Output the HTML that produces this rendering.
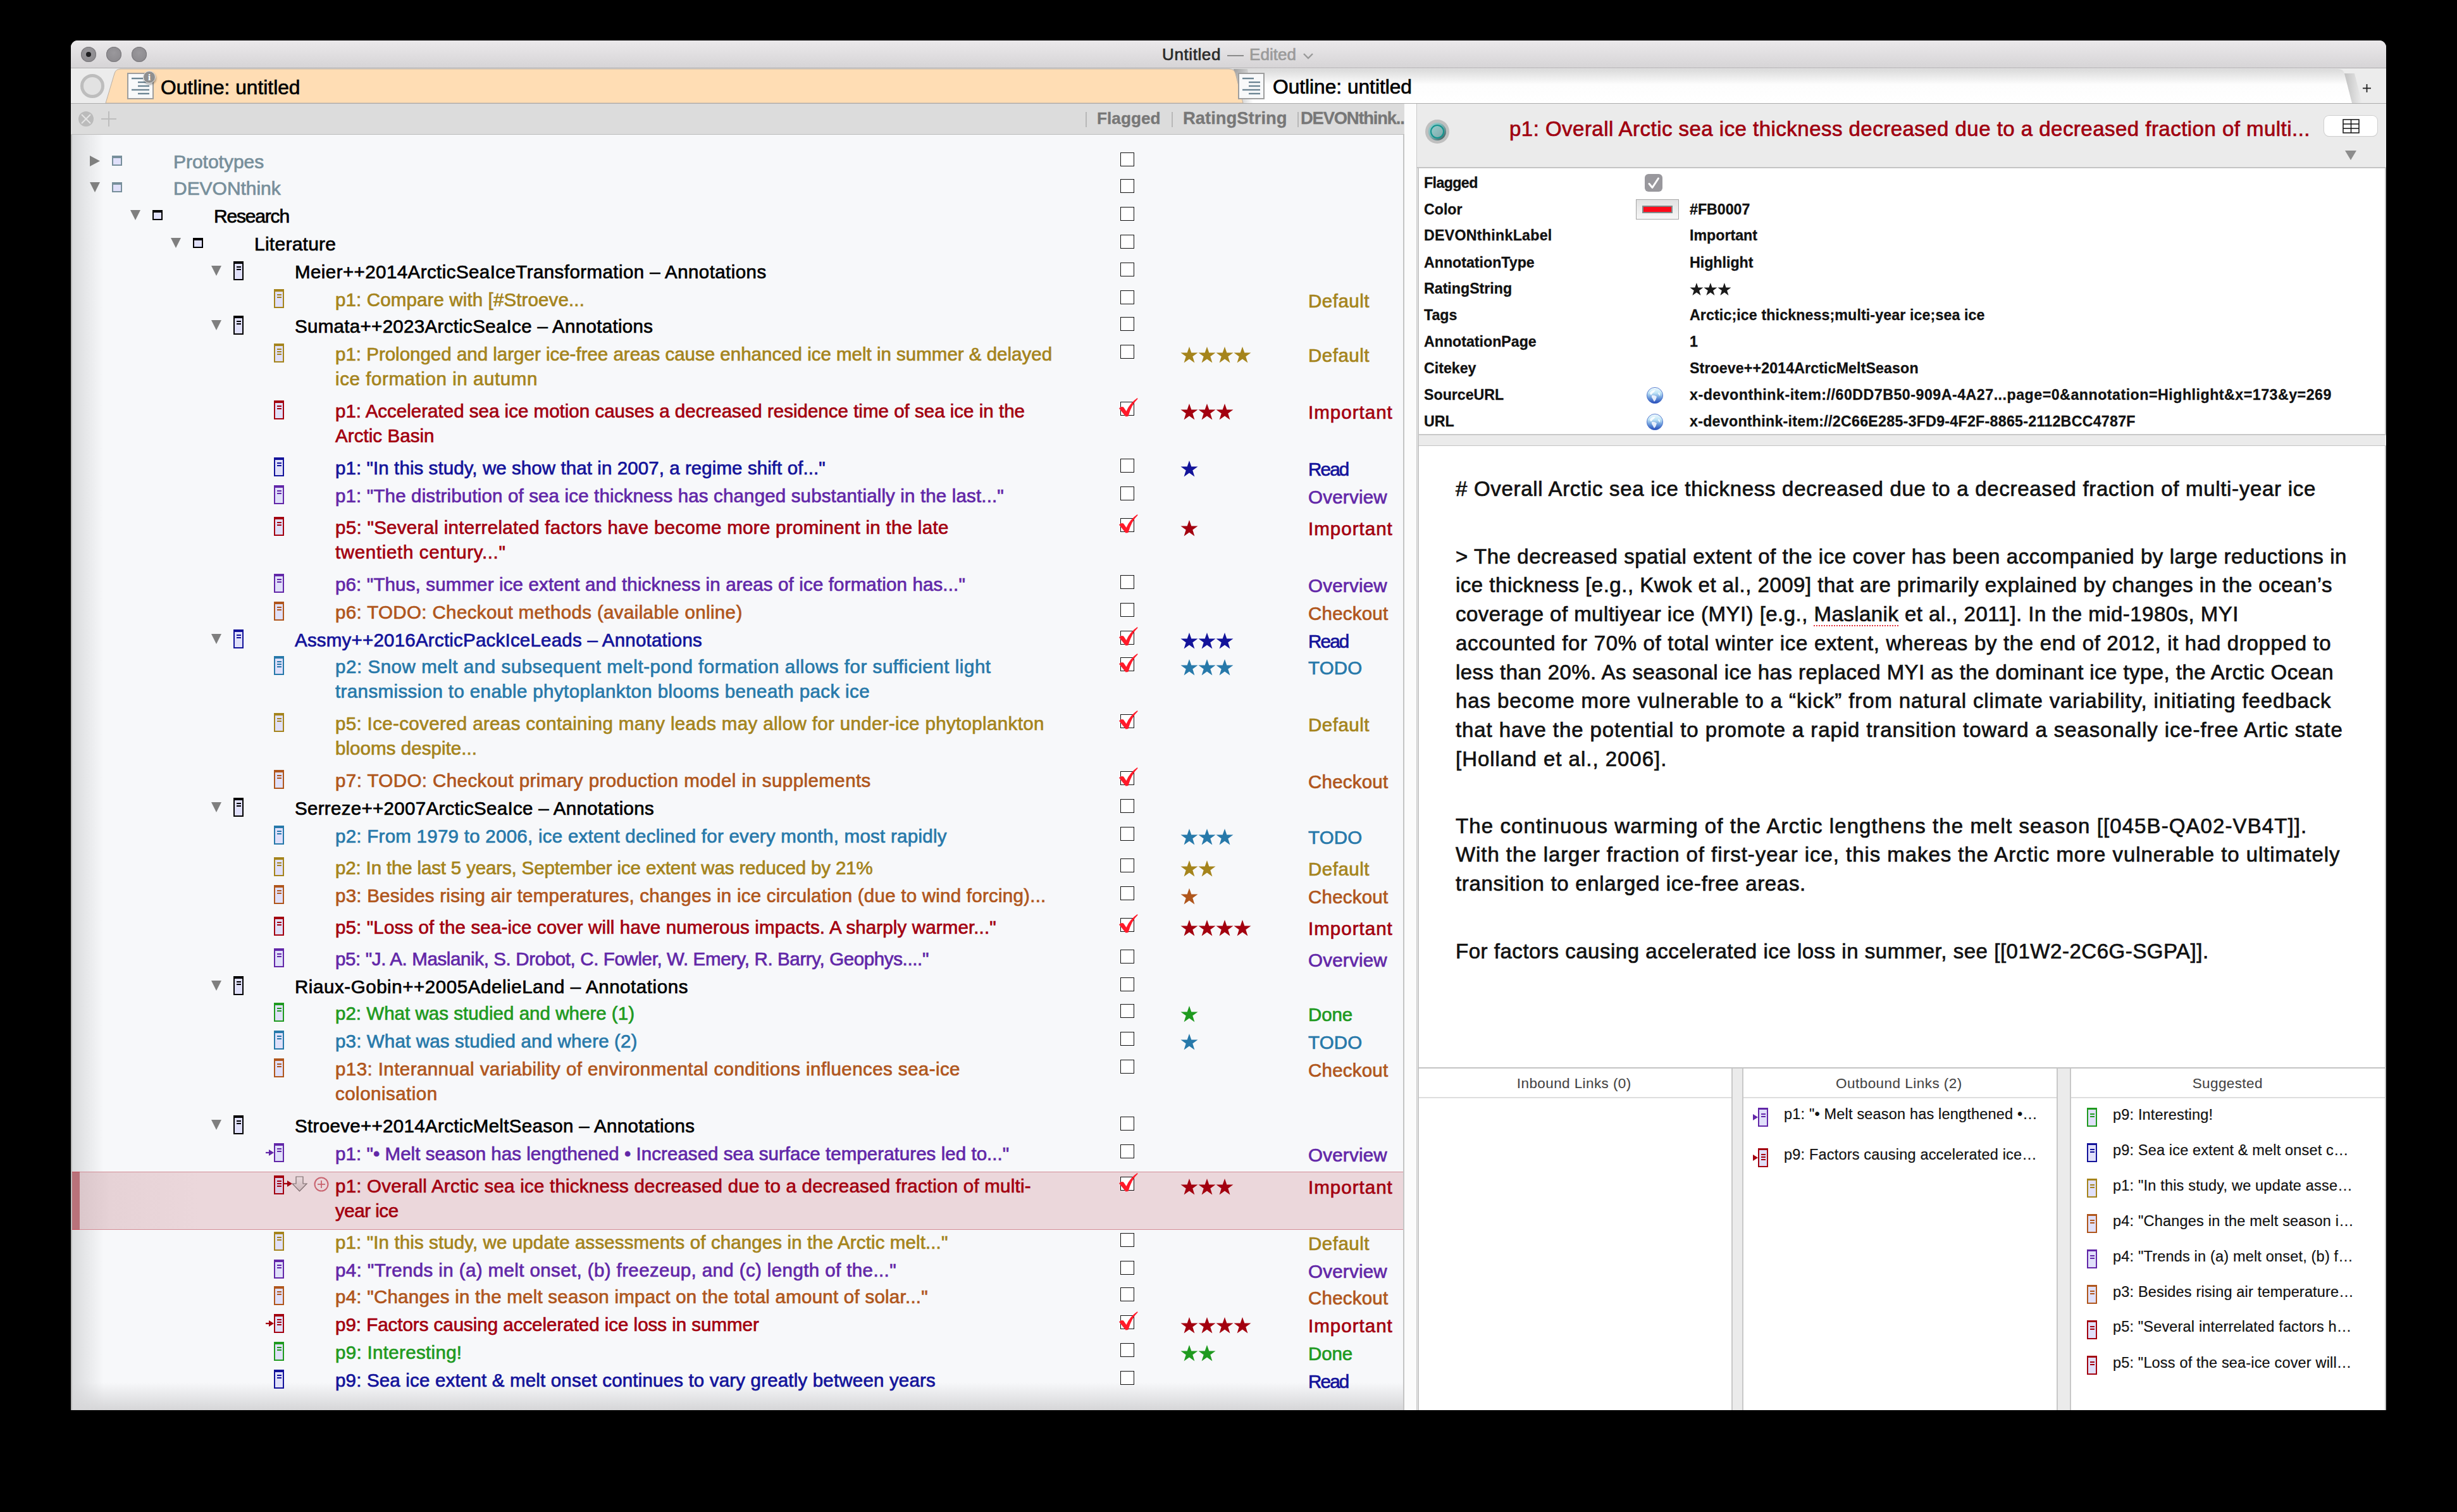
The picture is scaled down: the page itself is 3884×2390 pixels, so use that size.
<!DOCTYPE html><html><head><meta charset="utf-8"><style>
html,body{margin:0;padding:0;}
body{width:3884px;height:2390px;background:#000;position:relative;overflow:hidden;font-family:"Liberation Sans", sans-serif;}
.r{position:absolute;}
.t{position:absolute;white-space:nowrap;font-family:"Liberation Sans", sans-serif;-webkit-text-stroke:0.7px currentColor;}
.t b,.bd{-webkit-text-stroke-width:0.3px;}
</style></head><body>
<div class="r" style="left:112px;top:64px;width:3660px;height:2165px;background:#ececec;border-radius:11px 11px 0 0;"></div>
<div class="r" style="left:112px;top:64px;width:3660px;height:43px;background:linear-gradient(#ebe9eb,#d6d4d6);border-radius:11px 11px 0 0;"></div>
<div class="r" style="left:112px;top:107px;width:3660px;height:1px;background:#aeacae;"></div>
<div class="r" style="left:128px;top:74px;width:24px;height:24px;border-radius:50%;background:radial-gradient(circle at 50% 40%,#9a989c,#88868a);box-shadow:inset 0 0 0 1px #7b797d;"></div>
<div class="r" style="left:168px;top:74px;width:24px;height:24px;border-radius:50%;background:radial-gradient(circle at 50% 40%,#9a989c,#88868a);box-shadow:inset 0 0 0 1px #7b797d;"></div>
<div class="r" style="left:208px;top:74px;width:24px;height:24px;border-radius:50%;background:radial-gradient(circle at 50% 40%,#9a989c,#88868a);box-shadow:inset 0 0 0 1px #7b797d;"></div>
<div class="r" style="left:136px;top:82px;width:8px;height:8px;border-radius:50%;background:#1e1e20;"></div>
<div class="t kti1" style="left:1837.00px;top:71.39px;font-size:26px;line-height:31.2px;color:#2a2a2a;letter-spacing:0.605px;">Untitled</div>
<div class="r" style="left:1940px;top:87px;width:26px;height:2.4px;background:#8a8a8a;"></div>
<div class="t kti2" style="left:1975.00px;top:71.39px;font-size:26px;line-height:31.2px;color:#9a9a9a;letter-spacing:0.044px;">Edited</div>
<svg class="r" style="left:2059px;top:83px;" width="18" height="12" viewBox="0 0 18 12"><polyline points="2,2 9,9 16,2" fill="none" stroke="#9a9a9a" stroke-width="2.4"/></svg>
<div class="r" style="left:112px;top:108px;width:3660px;height:55px;background:#ececec;"></div>
<div class="r" style="left:127px;top:117px;width:28px;height:28px;border-radius:50%;border:5px solid #bdbdbd;background:#e2e2e2;"></div>
<svg class="r" style="left:1940px;top:108px;" width="1790" height="56" viewBox="0 0 1790 56"><defs><linearGradient id="tg" x1="0" y1="0" x2="0" y2="1"><stop offset="0" stop-color="#d9d9d9"/><stop offset="0.45" stop-color="#fdfdfd"/><stop offset="1" stop-color="#ffffff"/></linearGradient></defs><path d="M0,55 L0,1 L1756,1 Q1764,1 1766,8 L1778,55 Z" fill="url(#tg)"/></svg>
<svg class="r" style="left:3700px;top:108px;" width="40" height="56" viewBox="0 0 40 56"><defs><linearGradient id="sg2" x1="0" y1="0" x2="1" y2="0"><stop offset="0" stop-color="rgba(0,0,0,0.18)"/><stop offset="1" stop-color="rgba(0,0,0,0)"/></linearGradient></defs><path d="M6,8 L18,55 L34,55 L22,8 Z" fill="url(#sg2)"/></svg>
<svg class="r" style="left:1945px;top:108px;" width="40" height="56" viewBox="0 0 40 56"><defs><linearGradient id="sg1" x1="0" y1="0" x2="1" y2="0"><stop offset="0" stop-color="rgba(0,0,0,0.28)"/><stop offset="1" stop-color="rgba(0,0,0,0)"/></linearGradient></defs><path d="M5,1 L16,55 L36,55 L27,1 Z" fill="url(#sg1)"/></svg>
<svg class="r" style="left:150px;top:108px;" width="1830" height="56" viewBox="0 0 1830 56"><path d="M17,55 L31,8 Q33,1 41,1 L1793,1 Q1801,1 1803,8 L1815,55 Z" fill="#ffddb4" stroke="#b9b0a6" stroke-width="1"/></svg>
<div class="r" style="left:112px;top:163px;width:3660px;height:1px;background:#acacac;"></div>
<svg class="r" style="left:201px;top:115px;" width="42" height="42" viewBox="0 0 42 42"><rect x="1" y="1" width="40" height="40" fill="#f8f9fa" stroke="#9e9e9e" stroke-width="2"/><g stroke="#6d8593" stroke-width="2.4"><line x1="7" y1="9" x2="25" y2="9"/><line x1="17" y1="15" x2="35" y2="15"/><line x1="17" y1="21" x2="35" y2="21"/><line x1="7" y1="27" x2="35" y2="27"/><line x1="17" y1="33" x2="35" y2="33"/></g></svg>
<div class="r" style="left:226px;top:112px;width:18px;height:18px;border-radius:50%;background:#8f8f8f;border:1.5px solid #e8e8e8;box-shadow:1px 2px 3px rgba(0,0,0,.35);color:#fff;font:bold 15px/18px 'Liberation Serif',serif;text-align:center;">i</div>
<div class="t ktab1" style="left:254.00px;top:118.50px;font-size:31.7px;line-height:38.04px;color:#000;letter-spacing:0.018px;">Outline: untitled</div>
<svg class="r" style="left:1957px;top:115px;" width="42" height="42" viewBox="0 0 42 42"><rect x="1" y="1" width="40" height="40" fill="#f8f9fa" stroke="#9e9e9e" stroke-width="2"/><g stroke="#6d8593" stroke-width="2.4"><line x1="7" y1="9" x2="25" y2="9"/><line x1="17" y1="15" x2="35" y2="15"/><line x1="17" y1="21" x2="35" y2="21"/><line x1="7" y1="27" x2="35" y2="27"/><line x1="17" y1="33" x2="35" y2="33"/></g></svg>
<div class="t ktab2" style="left:2012.00px;top:117.50px;font-size:31.7px;line-height:38.04px;color:#000;letter-spacing:-0.012px;">Outline: untitled</div>
<svg class="r" style="left:3735px;top:133px;" width="13" height="13" viewBox="0 0 13 13"><g stroke="#222" stroke-width="1.8"><line x1="6.5" y1="0" x2="6.5" y2="13"/><line x1="0" y1="6.5" x2="13" y2="6.5"/></g></svg>
<div class="r" style="left:112px;top:164px;width:2108px;height:48px;background:#dcdcdc;"></div>
<div class="r" style="left:112px;top:212px;width:2108px;height:1px;background:#bdbdbd;"></div>
<svg class="r" style="left:123px;top:175px;" width="26" height="26" viewBox="0 0 26 26"><circle cx="13" cy="13" r="12" fill="#bbbbbb"/><g stroke="#e4e4e4" stroke-width="2"><line x1="6" y1="6" x2="20" y2="20"/><line x1="20" y1="6" x2="6" y2="20"/></g></svg>
<svg class="r" style="left:159px;top:175px;" width="26" height="26" viewBox="0 0 26 26"><g stroke="#bdbdbd" stroke-width="2"><line x1="13" y1="1" x2="13" y2="25"/><line x1="1" y1="13" x2="25" y2="13"/></g></svg>
<div class="r" style="left:1716px;top:177px;width:1.5px;height:24px;background:#b8b8b8;"></div>
<div class="r" style="left:1852px;top:177px;width:1.5px;height:24px;background:#b8b8b8;"></div>
<div class="r" style="left:2051px;top:177px;width:1.5px;height:24px;background:#b8b8b8;"></div>
<div class="t kh1" style="left:1734.00px;top:172.20px;font-size:26.2px;line-height:31.44px;color:#777;font-weight:bold;-webkit-text-stroke-width:0.3px;letter-spacing:0.030px;">Flagged</div>
<div class="t kh2" style="left:1870.00px;top:171.07px;font-size:27.4px;line-height:32.88px;color:#777;font-weight:bold;-webkit-text-stroke-width:0.3px;letter-spacing:0.021px;">RatingString</div>
<div class="t" style="left:2056.00px;top:171.07px;font-size:27.4px;line-height:32.88px;color:#777;font-weight:bold;-webkit-text-stroke-width:0.3px;letter-spacing:-1.2px;">DEVONthink..</div>
<div class="r" style="left:114px;top:213px;width:2104px;height:2016px;background:#f7f8fa;"></div>
<div class="r" style="left:114px;top:213px;width:50px;height:2016px;background:linear-gradient(90deg,#d9dadc,rgba(247,248,250,0));"></div>
<div class="r" style="left:114px;top:2185px;width:2104px;height:44px;background:linear-gradient(rgba(247,248,250,0),#d6d6d8);"></div>
<div class="r" style="left:2218px;top:213px;width:2px;height:2016px;background:#c4c4c4;"></div>
<div class="r" style="left:2220px;top:164px;width:19px;height:2065px;background:#fbfbfb;"></div>
<div class="r" style="left:2239px;top:164px;width:1px;height:2065px;background:#c8c8c8;"></div>
<svg class="r" style="left:142px;top:246px;" width="16" height="17" viewBox="0 0 16 17"><polygon points="0,0 16,8.5 0,17" fill="#7f7f7f"/></svg>
<svg class="r" style="left:177px;top:246px;" width="16" height="16" viewBox="0 0 16 16"><rect x="1" y="1" width="14" height="14" fill="#e0e0fa" stroke="#778f9b" stroke-width="2"/><rect x="0" y="0" width="16" height="4" fill="#778f9b"/></svg>
<div class="t k0_0" style="left:274.00px;top:237.60px;font-size:30px;line-height:36.0px;color:#778f9b;letter-spacing:-0.022px;">Prototypes</div>
<div class="r" style="left:1771px;top:241px;width:22px;height:22px;background:#fff;border:1.5px solid #111;box-sizing:border-box;"></div>
<svg class="r" style="left:142px;top:288px;" width="16" height="16" viewBox="0 0 16 16"><polygon points="0,0 16,0 8,16" fill="#7f7f7f"/></svg>
<svg class="r" style="left:177px;top:288px;" width="16" height="16" viewBox="0 0 16 16"><rect x="1" y="1" width="14" height="14" fill="#e0e0fa" stroke="#778f9b" stroke-width="2"/><rect x="0" y="0" width="16" height="4" fill="#778f9b"/></svg>
<div class="t k1_0" style="left:274.00px;top:279.61px;font-size:30px;line-height:36.0px;color:#778f9b;letter-spacing:-0.036px;">DEVONthink</div>
<div class="r" style="left:1771px;top:283px;width:22px;height:22px;background:#fff;border:1.5px solid #111;box-sizing:border-box;"></div>
<svg class="r" style="left:206px;top:332px;" width="16" height="16" viewBox="0 0 16 16"><polygon points="0,0 16,0 8,16" fill="#7f7f7f"/></svg>
<svg class="r" style="left:241px;top:332px;" width="16" height="16" viewBox="0 0 16 16"><rect x="1" y="1" width="14" height="14" fill="#e0e0fa" stroke="#000" stroke-width="2"/><rect x="0" y="0" width="16" height="4" fill="#000"/></svg>
<div class="t k2_0" style="left:338.00px;top:323.61px;font-size:30px;line-height:36.0px;color:#000;letter-spacing:-1.188px;">Research</div>
<div class="r" style="left:1771px;top:327px;width:22px;height:22px;background:#fff;border:1.5px solid #111;box-sizing:border-box;"></div>
<svg class="r" style="left:270px;top:376px;" width="16" height="16" viewBox="0 0 16 16"><polygon points="0,0 16,0 8,16" fill="#7f7f7f"/></svg>
<svg class="r" style="left:305px;top:376px;" width="16" height="16" viewBox="0 0 16 16"><rect x="1" y="1" width="14" height="14" fill="#e0e0fa" stroke="#000" stroke-width="2"/><rect x="0" y="0" width="16" height="4" fill="#000"/></svg>
<div class="t k3_0" style="left:402.00px;top:367.61px;font-size:30px;line-height:36.0px;color:#000;letter-spacing:0.255px;">Literature</div>
<div class="r" style="left:1771px;top:371px;width:22px;height:22px;background:#fff;border:1.5px solid #111;box-sizing:border-box;"></div>
<svg class="r" style="left:334px;top:420px;" width="16" height="16" viewBox="0 0 16 16"><polygon points="0,0 16,0 8,16" fill="#7f7f7f"/></svg>
<svg class="r" style="left:369px;top:413px;" width="16" height="30" viewBox="0 0 16 30"><rect x="1" y="1" width="14" height="28" fill="#e0e0fa" stroke="#000" stroke-width="2"/><rect x="0" y="0" width="16" height="4" fill="#000"/><rect x="5" y="8" width="7" height="2" fill="#000"/><rect x="5" y="12" width="7" height="2" fill="#000"/></svg>
<div class="t k4_0" style="left:466.00px;top:412.08px;font-size:29.5px;line-height:35.4px;color:#000;letter-spacing:0.429px;">Meier++2014ArcticSeaIceTransformation – Annotations</div>
<div class="r" style="left:1771px;top:415px;width:22px;height:22px;background:#fff;border:1.5px solid #111;box-sizing:border-box;"></div>
<svg class="r" style="left:433px;top:457px;" width="16" height="30" viewBox="0 0 16 30"><rect x="1" y="1" width="14" height="28" fill="#e0e0fa" stroke="#a5841c" stroke-width="2"/><rect x="0" y="0" width="16" height="4" fill="#a5841c"/><rect x="5" y="8" width="7" height="2" fill="#a5841c"/><rect x="5" y="12" width="7" height="2" fill="#a5841c"/></svg>
<div class="t k5_0" style="left:530.00px;top:456.08px;font-size:29.5px;line-height:35.4px;color:#a5841c;letter-spacing:0.129px;">p1: Compare with [#Stroeve...</div>
<div class="r" style="left:1771px;top:459px;width:22px;height:22px;background:#fff;border:1.5px solid #111;box-sizing:border-box;"></div>
<div class="t klab_Default" style="left:2068.00px;top:458.08px;font-size:29.5px;line-height:35.4px;color:#a5841c;letter-spacing:0.503px;">Default</div>
<svg class="r" style="left:334px;top:506px;" width="16" height="16" viewBox="0 0 16 16"><polygon points="0,0 16,0 8,16" fill="#7f7f7f"/></svg>
<svg class="r" style="left:369px;top:499px;" width="16" height="30" viewBox="0 0 16 30"><rect x="1" y="1" width="14" height="28" fill="#e0e0fa" stroke="#000" stroke-width="2"/><rect x="0" y="0" width="16" height="4" fill="#000"/><rect x="5" y="8" width="7" height="2" fill="#000"/><rect x="5" y="12" width="7" height="2" fill="#000"/></svg>
<div class="t k6_0" style="left:466.00px;top:498.08px;font-size:29.5px;line-height:35.4px;color:#000;letter-spacing:0.315px;">Sumata++2023ArcticSeaIce – Annotations</div>
<div class="r" style="left:1771px;top:501px;width:22px;height:22px;background:#fff;border:1.5px solid #111;box-sizing:border-box;"></div>
<svg class="r" style="left:433px;top:543px;" width="16" height="30" viewBox="0 0 16 30"><rect x="1" y="1" width="14" height="28" fill="#e0e0fa" stroke="#a5841c" stroke-width="2"/><rect x="0" y="0" width="16" height="4" fill="#a5841c"/><rect x="5" y="8" width="7" height="2" fill="#a5841c"/><rect x="5" y="12" width="7" height="2" fill="#a5841c"/><rect x="5" y="16" width="7" height="2" fill="#a5841c"/></svg>
<div class="t k7_0" style="left:530.00px;top:542.08px;font-size:29.5px;line-height:35.4px;color:#a5841c;letter-spacing:-0.001px;">p1: Prolonged and larger ice-free areas cause enhanced ice melt in summer &amp; delayed</div>
<div class="t k7_1" style="left:530.00px;top:581.08px;font-size:29.5px;line-height:35.4px;color:#a5841c;letter-spacing:0.581px;">ice formation in autumn</div>
<div class="r" style="left:1771px;top:545px;width:22px;height:22px;background:#fff;border:1.5px solid #111;box-sizing:border-box;"></div>
<svg class="r" style="left:1866px;top:548px;" width="112" height="27" viewBox="0 0 112 27"><path transform="translate(0,0)" d="M14,0 L17.3,9.6 L27.5,9.6 L19.3,15.6 L22.4,25.6 L14,19.5 L5.6,25.6 L8.7,15.6 L0.5,9.6 L10.7,9.6 Z" fill="#a5841c"/><path transform="translate(28,0)" d="M14,0 L17.3,9.6 L27.5,9.6 L19.3,15.6 L22.4,25.6 L14,19.5 L5.6,25.6 L8.7,15.6 L0.5,9.6 L10.7,9.6 Z" fill="#a5841c"/><path transform="translate(56,0)" d="M14,0 L17.3,9.6 L27.5,9.6 L19.3,15.6 L22.4,25.6 L14,19.5 L5.6,25.6 L8.7,15.6 L0.5,9.6 L10.7,9.6 Z" fill="#a5841c"/><path transform="translate(84,0)" d="M14,0 L17.3,9.6 L27.5,9.6 L19.3,15.6 L22.4,25.6 L14,19.5 L5.6,25.6 L8.7,15.6 L0.5,9.6 L10.7,9.6 Z" fill="#a5841c"/></svg>
<div class="t klab_Default" style="left:2068.00px;top:544.08px;font-size:29.5px;line-height:35.4px;color:#a5841c;letter-spacing:0.503px;">Default</div>
<svg class="r" style="left:433px;top:633px;" width="16" height="30" viewBox="0 0 16 30"><rect x="1" y="1" width="14" height="28" fill="#e0e0fa" stroke="#a3000f" stroke-width="2"/><rect x="0" y="0" width="16" height="4" fill="#a3000f"/><rect x="5" y="8" width="7" height="2" fill="#a3000f"/><rect x="5" y="12" width="7" height="2" fill="#a3000f"/></svg>
<div class="t k8_0" style="left:530.00px;top:632.08px;font-size:29.5px;line-height:35.4px;color:#a3000f;letter-spacing:0.014px;">p1: Accelerated sea ice motion causes a decreased residence time of sea ice in the</div>
<div class="t k8_1" style="left:530.00px;top:671.08px;font-size:29.5px;line-height:35.4px;color:#a3000f;letter-spacing:0.072px;">Arctic Basin</div>
<div class="r" style="left:1771px;top:635px;width:22px;height:22px;background:#fff;border:1.5px solid #111;box-sizing:border-box;"></div>
<svg class="r" style="left:1768px;top:628px;" width="31" height="31" viewBox="0 0 31 31"><path d="M1,17.5 Q4,14 8,15.5 L12.5,22 Q18,9 30,1 L30.5,2.5 Q21,11 15.5,30 L11.5,30.5 Z" fill="#ff1a2a"/></svg>
<svg class="r" style="left:1866px;top:638px;" width="84" height="27" viewBox="0 0 84 27"><path transform="translate(0,0)" d="M14,0 L17.3,9.6 L27.5,9.6 L19.3,15.6 L22.4,25.6 L14,19.5 L5.6,25.6 L8.7,15.6 L0.5,9.6 L10.7,9.6 Z" fill="#a3000f"/><path transform="translate(28,0)" d="M14,0 L17.3,9.6 L27.5,9.6 L19.3,15.6 L22.4,25.6 L14,19.5 L5.6,25.6 L8.7,15.6 L0.5,9.6 L10.7,9.6 Z" fill="#a3000f"/><path transform="translate(56,0)" d="M14,0 L17.3,9.6 L27.5,9.6 L19.3,15.6 L22.4,25.6 L14,19.5 L5.6,25.6 L8.7,15.6 L0.5,9.6 L10.7,9.6 Z" fill="#a3000f"/></svg>
<div class="t klab_Important" style="left:2068.00px;top:634.08px;font-size:29.5px;line-height:35.4px;color:#a3000f;letter-spacing:1.019px;">Important</div>
<svg class="r" style="left:433px;top:723px;" width="16" height="30" viewBox="0 0 16 30"><rect x="1" y="1" width="14" height="28" fill="#e0e0fa" stroke="#13139a" stroke-width="2"/><rect x="0" y="0" width="16" height="4" fill="#13139a"/><rect x="5" y="8" width="7" height="2" fill="#13139a"/><rect x="5" y="12" width="7" height="2" fill="#13139a"/></svg>
<div class="t k9_0" style="left:530.00px;top:722.08px;font-size:29.5px;line-height:35.4px;color:#13139a;letter-spacing:0.080px;">p1: "In this study, we show that in 2007, a regime shift of..."</div>
<div class="r" style="left:1771px;top:725px;width:22px;height:22px;background:#fff;border:1.5px solid #111;box-sizing:border-box;"></div>
<svg class="r" style="left:1866px;top:728px;" width="28" height="27" viewBox="0 0 28 27"><path transform="translate(0,0)" d="M14,0 L17.3,9.6 L27.5,9.6 L19.3,15.6 L22.4,25.6 L14,19.5 L5.6,25.6 L8.7,15.6 L0.5,9.6 L10.7,9.6 Z" fill="#13139a"/></svg>
<div class="t klab_Read" style="left:2068.00px;top:724.08px;font-size:29.5px;line-height:35.4px;color:#13139a;letter-spacing:-1.782px;">Read</div>
<svg class="r" style="left:433px;top:767px;" width="16" height="30" viewBox="0 0 16 30"><rect x="1" y="1" width="14" height="28" fill="#e0e0fa" stroke="#6227a8" stroke-width="2"/><rect x="0" y="0" width="16" height="4" fill="#6227a8"/><rect x="5" y="8" width="7" height="2" fill="#6227a8"/><rect x="5" y="12" width="7" height="2" fill="#6227a8"/></svg>
<div class="t k10_0" style="left:530.00px;top:766.08px;font-size:29.5px;line-height:35.4px;color:#6227a8;letter-spacing:0.152px;">p1: "The distribution of sea ice thickness has changed substantially in the last..."</div>
<div class="r" style="left:1771px;top:769px;width:22px;height:22px;background:#fff;border:1.5px solid #111;box-sizing:border-box;"></div>
<div class="t klab_Overview" style="left:2068.00px;top:768.08px;font-size:29.5px;line-height:35.4px;color:#6227a8;letter-spacing:0.244px;">Overview</div>
<svg class="r" style="left:433px;top:817px;" width="16" height="30" viewBox="0 0 16 30"><rect x="1" y="1" width="14" height="28" fill="#e0e0fa" stroke="#a3000f" stroke-width="2"/><rect x="0" y="0" width="16" height="4" fill="#a3000f"/><rect x="5" y="8" width="7" height="2" fill="#a3000f"/><rect x="5" y="12" width="7" height="2" fill="#a3000f"/></svg>
<div class="t k11_0" style="left:530.00px;top:816.08px;font-size:29.5px;line-height:35.4px;color:#a3000f;letter-spacing:0.294px;">p5: "Several interrelated factors have become more prominent in the late</div>
<div class="t k11_1" style="left:530.00px;top:855.08px;font-size:29.5px;line-height:35.4px;color:#a3000f;letter-spacing:0.653px;">twentieth century..."</div>
<div class="r" style="left:1771px;top:819px;width:22px;height:22px;background:#fff;border:1.5px solid #111;box-sizing:border-box;"></div>
<svg class="r" style="left:1768px;top:812px;" width="31" height="31" viewBox="0 0 31 31"><path d="M1,17.5 Q4,14 8,15.5 L12.5,22 Q18,9 30,1 L30.5,2.5 Q21,11 15.5,30 L11.5,30.5 Z" fill="#ff1a2a"/></svg>
<svg class="r" style="left:1866px;top:822px;" width="28" height="27" viewBox="0 0 28 27"><path transform="translate(0,0)" d="M14,0 L17.3,9.6 L27.5,9.6 L19.3,15.6 L22.4,25.6 L14,19.5 L5.6,25.6 L8.7,15.6 L0.5,9.6 L10.7,9.6 Z" fill="#a3000f"/></svg>
<div class="t klab_Important" style="left:2068.00px;top:818.08px;font-size:29.5px;line-height:35.4px;color:#a3000f;letter-spacing:1.019px;">Important</div>
<svg class="r" style="left:433px;top:907px;" width="16" height="30" viewBox="0 0 16 30"><rect x="1" y="1" width="14" height="28" fill="#e0e0fa" stroke="#6227a8" stroke-width="2"/><rect x="0" y="0" width="16" height="4" fill="#6227a8"/><rect x="5" y="8" width="7" height="2" fill="#6227a8"/><rect x="5" y="12" width="7" height="2" fill="#6227a8"/></svg>
<div class="t k12_0" style="left:530.00px;top:906.08px;font-size:29.5px;line-height:35.4px;color:#6227a8;letter-spacing:0.144px;">p6: "Thus, summer ice extent and thickness in areas of ice formation has..."</div>
<div class="r" style="left:1771px;top:909px;width:22px;height:22px;background:#fff;border:1.5px solid #111;box-sizing:border-box;"></div>
<div class="t klab_Overview" style="left:2068.00px;top:908.08px;font-size:29.5px;line-height:35.4px;color:#6227a8;letter-spacing:0.244px;">Overview</div>
<svg class="r" style="left:433px;top:951px;" width="16" height="30" viewBox="0 0 16 30"><rect x="1" y="1" width="14" height="28" fill="#e0e0fa" stroke="#b0561c" stroke-width="2"/><rect x="0" y="0" width="16" height="4" fill="#b0561c"/><rect x="5" y="8" width="7" height="2" fill="#b0561c"/><rect x="5" y="12" width="7" height="2" fill="#b0561c"/></svg>
<div class="t k13_0" style="left:530.00px;top:950.08px;font-size:29.5px;line-height:35.4px;color:#b0561c;letter-spacing:0.370px;">p6: TODO: Checkout methods (available online)</div>
<div class="r" style="left:1771px;top:953px;width:22px;height:22px;background:#fff;border:1.5px solid #111;box-sizing:border-box;"></div>
<div class="t klab_Checkout" style="left:2068.00px;top:952.08px;font-size:29.5px;line-height:35.4px;color:#b0561c;letter-spacing:0.220px;">Checkout</div>
<svg class="r" style="left:334px;top:1002px;" width="16" height="16" viewBox="0 0 16 16"><polygon points="0,0 16,0 8,16" fill="#7f7f7f"/></svg>
<svg class="r" style="left:369px;top:995px;" width="16" height="30" viewBox="0 0 16 30"><rect x="1" y="1" width="14" height="28" fill="#e0e0fa" stroke="#13139a" stroke-width="2"/><rect x="0" y="0" width="16" height="4" fill="#13139a"/><rect x="5" y="8" width="7" height="2" fill="#13139a"/><rect x="5" y="12" width="7" height="2" fill="#13139a"/></svg>
<div class="t k14_0" style="left:466.00px;top:994.08px;font-size:29.5px;line-height:35.4px;color:#13139a;letter-spacing:0.218px;">Assmy++2016ArcticPackIceLeads – Annotations</div>
<div class="r" style="left:1771px;top:997px;width:22px;height:22px;background:#fff;border:1.5px solid #111;box-sizing:border-box;"></div>
<svg class="r" style="left:1768px;top:990px;" width="31" height="31" viewBox="0 0 31 31"><path d="M1,17.5 Q4,14 8,15.5 L12.5,22 Q18,9 30,1 L30.5,2.5 Q21,11 15.5,30 L11.5,30.5 Z" fill="#ff1a2a"/></svg>
<svg class="r" style="left:1866px;top:1000px;" width="84" height="27" viewBox="0 0 84 27"><path transform="translate(0,0)" d="M14,0 L17.3,9.6 L27.5,9.6 L19.3,15.6 L22.4,25.6 L14,19.5 L5.6,25.6 L8.7,15.6 L0.5,9.6 L10.7,9.6 Z" fill="#13139a"/><path transform="translate(28,0)" d="M14,0 L17.3,9.6 L27.5,9.6 L19.3,15.6 L22.4,25.6 L14,19.5 L5.6,25.6 L8.7,15.6 L0.5,9.6 L10.7,9.6 Z" fill="#13139a"/><path transform="translate(56,0)" d="M14,0 L17.3,9.6 L27.5,9.6 L19.3,15.6 L22.4,25.6 L14,19.5 L5.6,25.6 L8.7,15.6 L0.5,9.6 L10.7,9.6 Z" fill="#13139a"/></svg>
<div class="t klab_Read" style="left:2068.00px;top:996.08px;font-size:29.5px;line-height:35.4px;color:#13139a;letter-spacing:-1.782px;">Read</div>
<svg class="r" style="left:433px;top:1037px;" width="16" height="30" viewBox="0 0 16 30"><rect x="1" y="1" width="14" height="28" fill="#e0e0fa" stroke="#2779aa" stroke-width="2"/><rect x="0" y="0" width="16" height="4" fill="#2779aa"/><rect x="5" y="8" width="7" height="2" fill="#2779aa"/><rect x="5" y="12" width="7" height="2" fill="#2779aa"/><rect x="5" y="16" width="7" height="2" fill="#2779aa"/></svg>
<div class="t k15_0" style="left:530.00px;top:1036.08px;font-size:29.5px;line-height:35.4px;color:#2779aa;letter-spacing:0.550px;">p2: Snow melt and subsequent melt-pond formation allows for sufficient light</div>
<div class="t k15_1" style="left:530.00px;top:1075.08px;font-size:29.5px;line-height:35.4px;color:#2779aa;letter-spacing:0.390px;">transmission to enable phytoplankton blooms beneath pack ice</div>
<div class="r" style="left:1771px;top:1039px;width:22px;height:22px;background:#fff;border:1.5px solid #111;box-sizing:border-box;"></div>
<svg class="r" style="left:1768px;top:1032px;" width="31" height="31" viewBox="0 0 31 31"><path d="M1,17.5 Q4,14 8,15.5 L12.5,22 Q18,9 30,1 L30.5,2.5 Q21,11 15.5,30 L11.5,30.5 Z" fill="#ff1a2a"/></svg>
<svg class="r" style="left:1866px;top:1042px;" width="84" height="27" viewBox="0 0 84 27"><path transform="translate(0,0)" d="M14,0 L17.3,9.6 L27.5,9.6 L19.3,15.6 L22.4,25.6 L14,19.5 L5.6,25.6 L8.7,15.6 L0.5,9.6 L10.7,9.6 Z" fill="#2779aa"/><path transform="translate(28,0)" d="M14,0 L17.3,9.6 L27.5,9.6 L19.3,15.6 L22.4,25.6 L14,19.5 L5.6,25.6 L8.7,15.6 L0.5,9.6 L10.7,9.6 Z" fill="#2779aa"/><path transform="translate(56,0)" d="M14,0 L17.3,9.6 L27.5,9.6 L19.3,15.6 L22.4,25.6 L14,19.5 L5.6,25.6 L8.7,15.6 L0.5,9.6 L10.7,9.6 Z" fill="#2779aa"/></svg>
<div class="t klab_TODO" style="left:2068.00px;top:1038.08px;font-size:29.5px;line-height:35.4px;color:#2779aa;letter-spacing:0.175px;">TODO</div>
<svg class="r" style="left:433px;top:1127px;" width="16" height="30" viewBox="0 0 16 30"><rect x="1" y="1" width="14" height="28" fill="#e0e0fa" stroke="#a5841c" stroke-width="2"/><rect x="0" y="0" width="16" height="4" fill="#a5841c"/><rect x="5" y="8" width="7" height="2" fill="#a5841c"/><rect x="5" y="12" width="7" height="2" fill="#a5841c"/></svg>
<div class="t k16_0" style="left:530.00px;top:1126.08px;font-size:29.5px;line-height:35.4px;color:#a5841c;letter-spacing:0.353px;">p5: Ice-covered areas containing many leads may allow for under-ice phytoplankton</div>
<div class="t k16_1" style="left:530.00px;top:1165.08px;font-size:29.5px;line-height:35.4px;color:#a5841c;letter-spacing:0.058px;">blooms despite...</div>
<div class="r" style="left:1771px;top:1129px;width:22px;height:22px;background:#fff;border:1.5px solid #111;box-sizing:border-box;"></div>
<svg class="r" style="left:1768px;top:1122px;" width="31" height="31" viewBox="0 0 31 31"><path d="M1,17.5 Q4,14 8,15.5 L12.5,22 Q18,9 30,1 L30.5,2.5 Q21,11 15.5,30 L11.5,30.5 Z" fill="#ff1a2a"/></svg>
<div class="t klab_Default" style="left:2068.00px;top:1128.08px;font-size:29.5px;line-height:35.4px;color:#a5841c;letter-spacing:0.503px;">Default</div>
<svg class="r" style="left:433px;top:1217px;" width="16" height="30" viewBox="0 0 16 30"><rect x="1" y="1" width="14" height="28" fill="#e0e0fa" stroke="#b0561c" stroke-width="2"/><rect x="0" y="0" width="16" height="4" fill="#b0561c"/><rect x="5" y="8" width="7" height="2" fill="#b0561c"/><rect x="5" y="12" width="7" height="2" fill="#b0561c"/></svg>
<div class="t k17_0" style="left:530.00px;top:1216.08px;font-size:29.5px;line-height:35.4px;color:#b0561c;letter-spacing:0.427px;">p7: TODO: Checkout primary production model in supplements</div>
<div class="r" style="left:1771px;top:1219px;width:22px;height:22px;background:#fff;border:1.5px solid #111;box-sizing:border-box;"></div>
<svg class="r" style="left:1768px;top:1212px;" width="31" height="31" viewBox="0 0 31 31"><path d="M1,17.5 Q4,14 8,15.5 L12.5,22 Q18,9 30,1 L30.5,2.5 Q21,11 15.5,30 L11.5,30.5 Z" fill="#ff1a2a"/></svg>
<div class="t klab_Checkout" style="left:2068.00px;top:1218.08px;font-size:29.5px;line-height:35.4px;color:#b0561c;letter-spacing:0.220px;">Checkout</div>
<svg class="r" style="left:334px;top:1268px;" width="16" height="16" viewBox="0 0 16 16"><polygon points="0,0 16,0 8,16" fill="#7f7f7f"/></svg>
<svg class="r" style="left:369px;top:1261px;" width="16" height="30" viewBox="0 0 16 30"><rect x="1" y="1" width="14" height="28" fill="#e0e0fa" stroke="#000" stroke-width="2"/><rect x="0" y="0" width="16" height="4" fill="#000"/><rect x="5" y="8" width="7" height="2" fill="#000"/><rect x="5" y="12" width="7" height="2" fill="#000"/></svg>
<div class="t k18_0" style="left:466.00px;top:1260.08px;font-size:29.5px;line-height:35.4px;color:#000;letter-spacing:0.309px;">Serreze++2007ArcticSeaIce – Annotations</div>
<div class="r" style="left:1771px;top:1263px;width:22px;height:22px;background:#fff;border:1.5px solid #111;box-sizing:border-box;"></div>
<svg class="r" style="left:433px;top:1305px;" width="16" height="30" viewBox="0 0 16 30"><rect x="1" y="1" width="14" height="28" fill="#e0e0fa" stroke="#2779aa" stroke-width="2"/><rect x="0" y="0" width="16" height="4" fill="#2779aa"/><rect x="5" y="8" width="7" height="2" fill="#2779aa"/><rect x="5" y="12" width="7" height="2" fill="#2779aa"/></svg>
<div class="t k19_0" style="left:530.00px;top:1304.08px;font-size:29.5px;line-height:35.4px;color:#2779aa;letter-spacing:0.264px;">p2: From 1979 to 2006, ice extent declined for every month, most rapidly</div>
<div class="r" style="left:1771px;top:1307px;width:22px;height:22px;background:#fff;border:1.5px solid #111;box-sizing:border-box;"></div>
<svg class="r" style="left:1866px;top:1310px;" width="84" height="27" viewBox="0 0 84 27"><path transform="translate(0,0)" d="M14,0 L17.3,9.6 L27.5,9.6 L19.3,15.6 L22.4,25.6 L14,19.5 L5.6,25.6 L8.7,15.6 L0.5,9.6 L10.7,9.6 Z" fill="#2779aa"/><path transform="translate(28,0)" d="M14,0 L17.3,9.6 L27.5,9.6 L19.3,15.6 L22.4,25.6 L14,19.5 L5.6,25.6 L8.7,15.6 L0.5,9.6 L10.7,9.6 Z" fill="#2779aa"/><path transform="translate(56,0)" d="M14,0 L17.3,9.6 L27.5,9.6 L19.3,15.6 L22.4,25.6 L14,19.5 L5.6,25.6 L8.7,15.6 L0.5,9.6 L10.7,9.6 Z" fill="#2779aa"/></svg>
<div class="t klab_TODO" style="left:2068.00px;top:1306.08px;font-size:29.5px;line-height:35.4px;color:#2779aa;letter-spacing:0.175px;">TODO</div>
<svg class="r" style="left:433px;top:1355px;" width="16" height="30" viewBox="0 0 16 30"><rect x="1" y="1" width="14" height="28" fill="#e0e0fa" stroke="#a5841c" stroke-width="2"/><rect x="0" y="0" width="16" height="4" fill="#a5841c"/><rect x="5" y="8" width="7" height="2" fill="#a5841c"/><rect x="5" y="12" width="7" height="2" fill="#a5841c"/></svg>
<div class="t k20_0" style="left:530.00px;top:1354.08px;font-size:29.5px;line-height:35.4px;color:#a5841c;letter-spacing:-0.153px;">p2: In the last 5 years, September ice extent was reduced by 21%</div>
<div class="r" style="left:1771px;top:1357px;width:22px;height:22px;background:#fff;border:1.5px solid #111;box-sizing:border-box;"></div>
<svg class="r" style="left:1866px;top:1360px;" width="56" height="27" viewBox="0 0 56 27"><path transform="translate(0,0)" d="M14,0 L17.3,9.6 L27.5,9.6 L19.3,15.6 L22.4,25.6 L14,19.5 L5.6,25.6 L8.7,15.6 L0.5,9.6 L10.7,9.6 Z" fill="#a5841c"/><path transform="translate(28,0)" d="M14,0 L17.3,9.6 L27.5,9.6 L19.3,15.6 L22.4,25.6 L14,19.5 L5.6,25.6 L8.7,15.6 L0.5,9.6 L10.7,9.6 Z" fill="#a5841c"/></svg>
<div class="t klab_Default" style="left:2068.00px;top:1356.08px;font-size:29.5px;line-height:35.4px;color:#a5841c;letter-spacing:0.503px;">Default</div>
<svg class="r" style="left:433px;top:1399px;" width="16" height="30" viewBox="0 0 16 30"><rect x="1" y="1" width="14" height="28" fill="#e0e0fa" stroke="#b0561c" stroke-width="2"/><rect x="0" y="0" width="16" height="4" fill="#b0561c"/><rect x="5" y="8" width="7" height="2" fill="#b0561c"/><rect x="5" y="12" width="7" height="2" fill="#b0561c"/></svg>
<div class="t k21_0" style="left:530.00px;top:1398.08px;font-size:29.5px;line-height:35.4px;color:#b0561c;letter-spacing:0.246px;">p3: Besides rising air temperatures, changes in ice circulation (due to wind forcing)...</div>
<div class="r" style="left:1771px;top:1401px;width:22px;height:22px;background:#fff;border:1.5px solid #111;box-sizing:border-box;"></div>
<svg class="r" style="left:1866px;top:1404px;" width="28" height="27" viewBox="0 0 28 27"><path transform="translate(0,0)" d="M14,0 L17.3,9.6 L27.5,9.6 L19.3,15.6 L22.4,25.6 L14,19.5 L5.6,25.6 L8.7,15.6 L0.5,9.6 L10.7,9.6 Z" fill="#b0561c"/></svg>
<div class="t klab_Checkout" style="left:2068.00px;top:1400.08px;font-size:29.5px;line-height:35.4px;color:#b0561c;letter-spacing:0.220px;">Checkout</div>
<svg class="r" style="left:433px;top:1449px;" width="16" height="30" viewBox="0 0 16 30"><rect x="1" y="1" width="14" height="28" fill="#e0e0fa" stroke="#a3000f" stroke-width="2"/><rect x="0" y="0" width="16" height="4" fill="#a3000f"/><rect x="5" y="8" width="7" height="2" fill="#a3000f"/><rect x="5" y="12" width="7" height="2" fill="#a3000f"/></svg>
<div class="t k22_0" style="left:530.00px;top:1448.08px;font-size:29.5px;line-height:35.4px;color:#a3000f;letter-spacing:0.135px;">p5: "Loss of the sea-ice cover will have numerous impacts. A sharply warmer..."</div>
<div class="r" style="left:1771px;top:1451px;width:22px;height:22px;background:#fff;border:1.5px solid #111;box-sizing:border-box;"></div>
<svg class="r" style="left:1768px;top:1444px;" width="31" height="31" viewBox="0 0 31 31"><path d="M1,17.5 Q4,14 8,15.5 L12.5,22 Q18,9 30,1 L30.5,2.5 Q21,11 15.5,30 L11.5,30.5 Z" fill="#ff1a2a"/></svg>
<svg class="r" style="left:1866px;top:1454px;" width="112" height="27" viewBox="0 0 112 27"><path transform="translate(0,0)" d="M14,0 L17.3,9.6 L27.5,9.6 L19.3,15.6 L22.4,25.6 L14,19.5 L5.6,25.6 L8.7,15.6 L0.5,9.6 L10.7,9.6 Z" fill="#a3000f"/><path transform="translate(28,0)" d="M14,0 L17.3,9.6 L27.5,9.6 L19.3,15.6 L22.4,25.6 L14,19.5 L5.6,25.6 L8.7,15.6 L0.5,9.6 L10.7,9.6 Z" fill="#a3000f"/><path transform="translate(56,0)" d="M14,0 L17.3,9.6 L27.5,9.6 L19.3,15.6 L22.4,25.6 L14,19.5 L5.6,25.6 L8.7,15.6 L0.5,9.6 L10.7,9.6 Z" fill="#a3000f"/><path transform="translate(84,0)" d="M14,0 L17.3,9.6 L27.5,9.6 L19.3,15.6 L22.4,25.6 L14,19.5 L5.6,25.6 L8.7,15.6 L0.5,9.6 L10.7,9.6 Z" fill="#a3000f"/></svg>
<div class="t klab_Important" style="left:2068.00px;top:1450.08px;font-size:29.5px;line-height:35.4px;color:#a3000f;letter-spacing:1.019px;">Important</div>
<svg class="r" style="left:433px;top:1499px;" width="16" height="30" viewBox="0 0 16 30"><rect x="1" y="1" width="14" height="28" fill="#e0e0fa" stroke="#6227a8" stroke-width="2"/><rect x="0" y="0" width="16" height="4" fill="#6227a8"/><rect x="5" y="8" width="7" height="2" fill="#6227a8"/><rect x="5" y="12" width="7" height="2" fill="#6227a8"/></svg>
<div class="t k23_0" style="left:530.00px;top:1498.08px;font-size:29.5px;line-height:35.4px;color:#6227a8;letter-spacing:-0.370px;">p5: "J. A. Maslanik, S. Drobot, C. Fowler, W. Emery, R. Barry, Geophys...."</div>
<div class="r" style="left:1771px;top:1501px;width:22px;height:22px;background:#fff;border:1.5px solid #111;box-sizing:border-box;"></div>
<div class="t klab_Overview" style="left:2068.00px;top:1500.08px;font-size:29.5px;line-height:35.4px;color:#6227a8;letter-spacing:0.244px;">Overview</div>
<svg class="r" style="left:334px;top:1550px;" width="16" height="16" viewBox="0 0 16 16"><polygon points="0,0 16,0 8,16" fill="#7f7f7f"/></svg>
<svg class="r" style="left:369px;top:1543px;" width="16" height="30" viewBox="0 0 16 30"><rect x="1" y="1" width="14" height="28" fill="#e0e0fa" stroke="#000" stroke-width="2"/><rect x="0" y="0" width="16" height="4" fill="#000"/><rect x="5" y="8" width="7" height="2" fill="#000"/><rect x="5" y="12" width="7" height="2" fill="#000"/></svg>
<div class="t k24_0" style="left:466.00px;top:1542.08px;font-size:29.5px;line-height:35.4px;color:#000;letter-spacing:0.569px;">Riaux-Gobin++2005AdelieLand – Annotations</div>
<div class="r" style="left:1771px;top:1545px;width:22px;height:22px;background:#fff;border:1.5px solid #111;box-sizing:border-box;"></div>
<svg class="r" style="left:433px;top:1585px;" width="16" height="30" viewBox="0 0 16 30"><rect x="1" y="1" width="14" height="28" fill="#e0e0fa" stroke="#1f9a1f" stroke-width="2"/><rect x="0" y="0" width="16" height="4" fill="#1f9a1f"/><rect x="5" y="8" width="7" height="2" fill="#1f9a1f"/><rect x="5" y="12" width="7" height="2" fill="#1f9a1f"/></svg>
<div class="t k25_0" style="left:530.00px;top:1584.08px;font-size:29.5px;line-height:35.4px;color:#1f9a1f;letter-spacing:0.022px;">p2: What was studied and where (1)</div>
<div class="r" style="left:1771px;top:1587px;width:22px;height:22px;background:#fff;border:1.5px solid #111;box-sizing:border-box;"></div>
<svg class="r" style="left:1866px;top:1590px;" width="28" height="27" viewBox="0 0 28 27"><path transform="translate(0,0)" d="M14,0 L17.3,9.6 L27.5,9.6 L19.3,15.6 L22.4,25.6 L14,19.5 L5.6,25.6 L8.7,15.6 L0.5,9.6 L10.7,9.6 Z" fill="#1f9a1f"/></svg>
<div class="t klab_Done" style="left:2068.00px;top:1586.08px;font-size:29.5px;line-height:35.4px;color:#1f9a1f;letter-spacing:-0.131px;">Done</div>
<svg class="r" style="left:433px;top:1629px;" width="16" height="30" viewBox="0 0 16 30"><rect x="1" y="1" width="14" height="28" fill="#e0e0fa" stroke="#2779aa" stroke-width="2"/><rect x="0" y="0" width="16" height="4" fill="#2779aa"/><rect x="5" y="8" width="7" height="2" fill="#2779aa"/><rect x="5" y="12" width="7" height="2" fill="#2779aa"/></svg>
<div class="t k26_0" style="left:530.00px;top:1628.08px;font-size:29.5px;line-height:35.4px;color:#2779aa;letter-spacing:0.157px;">p3: What was studied and where (2)</div>
<div class="r" style="left:1771px;top:1631px;width:22px;height:22px;background:#fff;border:1.5px solid #111;box-sizing:border-box;"></div>
<svg class="r" style="left:1866px;top:1634px;" width="28" height="27" viewBox="0 0 28 27"><path transform="translate(0,0)" d="M14,0 L17.3,9.6 L27.5,9.6 L19.3,15.6 L22.4,25.6 L14,19.5 L5.6,25.6 L8.7,15.6 L0.5,9.6 L10.7,9.6 Z" fill="#2779aa"/></svg>
<div class="t klab_TODO" style="left:2068.00px;top:1630.08px;font-size:29.5px;line-height:35.4px;color:#2779aa;letter-spacing:0.175px;">TODO</div>
<svg class="r" style="left:433px;top:1673px;" width="16" height="30" viewBox="0 0 16 30"><rect x="1" y="1" width="14" height="28" fill="#e0e0fa" stroke="#b0561c" stroke-width="2"/><rect x="0" y="0" width="16" height="4" fill="#b0561c"/><rect x="5" y="8" width="7" height="2" fill="#b0561c"/><rect x="5" y="12" width="7" height="2" fill="#b0561c"/></svg>
<div class="t k27_0" style="left:530.00px;top:1672.08px;font-size:29.5px;line-height:35.4px;color:#b0561c;letter-spacing:0.425px;">p13: Interannual variability of environmental conditions influences sea-ice</div>
<div class="t k27_1" style="left:530.00px;top:1711.08px;font-size:29.5px;line-height:35.4px;color:#b0561c;letter-spacing:0.483px;">colonisation</div>
<div class="r" style="left:1771px;top:1675px;width:22px;height:22px;background:#fff;border:1.5px solid #111;box-sizing:border-box;"></div>
<div class="t klab_Checkout" style="left:2068.00px;top:1674.08px;font-size:29.5px;line-height:35.4px;color:#b0561c;letter-spacing:0.220px;">Checkout</div>
<svg class="r" style="left:334px;top:1770px;" width="16" height="16" viewBox="0 0 16 16"><polygon points="0,0 16,0 8,16" fill="#7f7f7f"/></svg>
<svg class="r" style="left:369px;top:1763px;" width="16" height="30" viewBox="0 0 16 30"><rect x="1" y="1" width="14" height="28" fill="#e0e0fa" stroke="#000" stroke-width="2"/><rect x="0" y="0" width="16" height="4" fill="#000"/><rect x="5" y="8" width="7" height="2" fill="#000"/><rect x="5" y="12" width="7" height="2" fill="#000"/></svg>
<div class="t k28_0" style="left:466.00px;top:1762.08px;font-size:29.5px;line-height:35.4px;color:#000;letter-spacing:0.328px;">Stroeve++2014ArcticMeltSeason – Annotations</div>
<div class="r" style="left:1771px;top:1765px;width:22px;height:22px;background:#fff;border:1.5px solid #111;box-sizing:border-box;"></div>
<svg class="r" style="left:433px;top:1807px;" width="16" height="30" viewBox="0 0 16 30"><rect x="1" y="1" width="14" height="28" fill="#e0e0fa" stroke="#6227a8" stroke-width="2"/><rect x="0" y="0" width="16" height="4" fill="#6227a8"/><rect x="5" y="8" width="7" height="2" fill="#6227a8"/><rect x="5" y="12" width="7" height="2" fill="#6227a8"/></svg>
<svg class="r" style="left:420px;top:1817px;" width="14" height="10" viewBox="0 0 14 10"><line x1="0" y1="5" x2="7" y2="5" stroke="#6227a8" stroke-width="2.2"/><polygon points="5,0 13,5 5,10" fill="#6227a8"/></svg>
<div class="t k29_0" style="left:530.00px;top:1806.08px;font-size:29.5px;line-height:35.4px;color:#6227a8;letter-spacing:0.046px;">p1: "• Melt season has lengthened • Increased sea surface temperatures led to..."</div>
<div class="r" style="left:1771px;top:1809px;width:22px;height:22px;background:#fff;border:1.5px solid #111;box-sizing:border-box;"></div>
<div class="t klab_Overview" style="left:2068.00px;top:1808.08px;font-size:29.5px;line-height:35.4px;color:#6227a8;letter-spacing:0.244px;">Overview</div>
<div class="r" style="left:114px;top:1852px;width:2104px;height:92px;background:linear-gradient(90deg,#d8c4c8 0px,#e6d2d6 60px,#ebd7db 200px);border-top:1px solid #d38d96;border-bottom:1px solid #d38d96;box-sizing:border-box;"></div>
<div class="r" style="left:114px;top:1852px;width:12px;height:92px;background:#b8727a;border-top:1px solid #c4505c;border-bottom:1px solid #c4505c;box-sizing:border-box;"></div>
<svg class="r" style="left:433px;top:1857.5px;" width="16" height="30" viewBox="0 0 16 30"><rect x="1" y="1" width="14" height="28" fill="#dccbe3" stroke="#a3000f" stroke-width="2"/><rect x="0" y="0" width="16" height="4" fill="#a3000f"/><rect x="5" y="8" width="7" height="2" fill="#a3000f"/><rect x="5" y="12" width="7" height="2" fill="#a3000f"/><rect x="5" y="16" width="7" height="2" fill="#a3000f"/></svg>
<svg class="r" style="left:449px;top:1865.5px;" width="14" height="10" viewBox="0 0 14 10"><line x1="0" y1="5" x2="7" y2="5" stroke="#a3000f" stroke-width="2.2"/><polygon points="5,0 13,5 5,10" fill="#a3000f"/></svg>
<svg class="r" style="left:462px;top:1859px;" width="25" height="26" viewBox="0 0 25 26"><defs><linearGradient id="dg" x1="0" y1="0" x2="0" y2="1"><stop offset="0" stop-color="#eadadd"/><stop offset="1" stop-color="#c9b5b8"/></linearGradient></defs><path d="M6,1 L17,1 L17,12 L23,12 L11.5,24 L0,12 L6,12 Z" fill="url(#dg)" stroke="#7a6a6c" stroke-width="1.2"/></svg>
<svg class="r" style="left:496px;top:1860px;" width="24" height="24" viewBox="0 0 24 24"><circle cx="12" cy="12" r="10.5" fill="none" stroke="#c9636f" stroke-width="2"/><g stroke="#c9636f" stroke-width="1.8"><line x1="12" y1="6" x2="12" y2="18"/><line x1="6" y1="12" x2="18" y2="12"/></g></svg>
<div class="t k30_0" style="left:530.00px;top:1856.58px;font-size:29.5px;line-height:35.4px;color:#a3000f;letter-spacing:0.228px;">p1: Overall Arctic sea ice thickness decreased due to a decreased fraction of multi-</div>
<div class="t k30_1" style="left:530.00px;top:1895.58px;font-size:29.5px;line-height:35.4px;color:#a3000f;letter-spacing:-0.462px;">year ice</div>
<div class="r" style="left:1771px;top:1859.5px;width:22px;height:22px;background:#fff;border:1.5px solid #111;box-sizing:border-box;"></div>
<svg class="r" style="left:1768px;top:1852.5px;" width="31" height="31" viewBox="0 0 31 31"><path d="M1,17.5 Q4,14 8,15.5 L12.5,22 Q18,9 30,1 L30.5,2.5 Q21,11 15.5,30 L11.5,30.5 Z" fill="#ff1a2a"/></svg>
<svg class="r" style="left:1866px;top:1862.5px;" width="84" height="27" viewBox="0 0 84 27"><path transform="translate(0,0)" d="M14,0 L17.3,9.6 L27.5,9.6 L19.3,15.6 L22.4,25.6 L14,19.5 L5.6,25.6 L8.7,15.6 L0.5,9.6 L10.7,9.6 Z" fill="#a3000f"/><path transform="translate(28,0)" d="M14,0 L17.3,9.6 L27.5,9.6 L19.3,15.6 L22.4,25.6 L14,19.5 L5.6,25.6 L8.7,15.6 L0.5,9.6 L10.7,9.6 Z" fill="#a3000f"/><path transform="translate(56,0)" d="M14,0 L17.3,9.6 L27.5,9.6 L19.3,15.6 L22.4,25.6 L14,19.5 L5.6,25.6 L8.7,15.6 L0.5,9.6 L10.7,9.6 Z" fill="#a3000f"/></svg>
<div class="t klab_Important" style="left:2068.00px;top:1858.58px;font-size:29.5px;line-height:35.4px;color:#a3000f;letter-spacing:1.019px;">Important</div>
<svg class="r" style="left:433px;top:1947px;" width="16" height="30" viewBox="0 0 16 30"><rect x="1" y="1" width="14" height="28" fill="#e0e0fa" stroke="#a5841c" stroke-width="2"/><rect x="0" y="0" width="16" height="4" fill="#a5841c"/><rect x="5" y="8" width="7" height="2" fill="#a5841c"/><rect x="5" y="12" width="7" height="2" fill="#a5841c"/></svg>
<div class="t k31_0" style="left:530.00px;top:1946.08px;font-size:29.5px;line-height:35.4px;color:#a5841c;letter-spacing:0.114px;">p1: "In this study, we update assessments of changes in the Arctic melt..."</div>
<div class="r" style="left:1771px;top:1949px;width:22px;height:22px;background:#fff;border:1.5px solid #111;box-sizing:border-box;"></div>
<div class="t klab_Default" style="left:2068.00px;top:1948.08px;font-size:29.5px;line-height:35.4px;color:#a5841c;letter-spacing:0.503px;">Default</div>
<svg class="r" style="left:433px;top:1991px;" width="16" height="30" viewBox="0 0 16 30"><rect x="1" y="1" width="14" height="28" fill="#e0e0fa" stroke="#6227a8" stroke-width="2"/><rect x="0" y="0" width="16" height="4" fill="#6227a8"/><rect x="5" y="8" width="7" height="2" fill="#6227a8"/><rect x="5" y="12" width="7" height="2" fill="#6227a8"/></svg>
<div class="t k32_0" style="left:530.00px;top:1990.08px;font-size:29.5px;line-height:35.4px;color:#6227a8;letter-spacing:0.395px;">p4: "Trends in (a) melt onset, (b) freezeup, and (c) length of the..."</div>
<div class="r" style="left:1771px;top:1993px;width:22px;height:22px;background:#fff;border:1.5px solid #111;box-sizing:border-box;"></div>
<div class="t klab_Overview" style="left:2068.00px;top:1992.08px;font-size:29.5px;line-height:35.4px;color:#6227a8;letter-spacing:0.244px;">Overview</div>
<svg class="r" style="left:433px;top:2033px;" width="16" height="30" viewBox="0 0 16 30"><rect x="1" y="1" width="14" height="28" fill="#e0e0fa" stroke="#b0561c" stroke-width="2"/><rect x="0" y="0" width="16" height="4" fill="#b0561c"/><rect x="5" y="8" width="7" height="2" fill="#b0561c"/><rect x="5" y="12" width="7" height="2" fill="#b0561c"/></svg>
<div class="t k33_0" style="left:530.00px;top:2032.08px;font-size:29.5px;line-height:35.4px;color:#b0561c;letter-spacing:0.245px;">p4: "Changes in the melt season impact on the total amount of solar..."</div>
<div class="r" style="left:1771px;top:2035px;width:22px;height:22px;background:#fff;border:1.5px solid #111;box-sizing:border-box;"></div>
<div class="t klab_Checkout" style="left:2068.00px;top:2034.08px;font-size:29.5px;line-height:35.4px;color:#b0561c;letter-spacing:0.220px;">Checkout</div>
<svg class="r" style="left:433px;top:2077px;" width="16" height="30" viewBox="0 0 16 30"><rect x="1" y="1" width="14" height="28" fill="#e0e0fa" stroke="#a3000f" stroke-width="2"/><rect x="0" y="0" width="16" height="4" fill="#a3000f"/><rect x="5" y="8" width="7" height="2" fill="#a3000f"/><rect x="5" y="12" width="7" height="2" fill="#a3000f"/><rect x="5" y="16" width="7" height="2" fill="#a3000f"/></svg>
<svg class="r" style="left:420px;top:2087px;" width="14" height="10" viewBox="0 0 14 10"><line x1="0" y1="5" x2="7" y2="5" stroke="#a3000f" stroke-width="2.2"/><polygon points="5,0 13,5 5,10" fill="#a3000f"/></svg>
<div class="t k34_0" style="left:530.00px;top:2076.08px;font-size:29.5px;line-height:35.4px;color:#a3000f;letter-spacing:-0.018px;">p9: Factors causing accelerated ice loss in summer</div>
<div class="r" style="left:1771px;top:2079px;width:22px;height:22px;background:#fff;border:1.5px solid #111;box-sizing:border-box;"></div>
<svg class="r" style="left:1768px;top:2072px;" width="31" height="31" viewBox="0 0 31 31"><path d="M1,17.5 Q4,14 8,15.5 L12.5,22 Q18,9 30,1 L30.5,2.5 Q21,11 15.5,30 L11.5,30.5 Z" fill="#ff1a2a"/></svg>
<svg class="r" style="left:1866px;top:2082px;" width="112" height="27" viewBox="0 0 112 27"><path transform="translate(0,0)" d="M14,0 L17.3,9.6 L27.5,9.6 L19.3,15.6 L22.4,25.6 L14,19.5 L5.6,25.6 L8.7,15.6 L0.5,9.6 L10.7,9.6 Z" fill="#a3000f"/><path transform="translate(28,0)" d="M14,0 L17.3,9.6 L27.5,9.6 L19.3,15.6 L22.4,25.6 L14,19.5 L5.6,25.6 L8.7,15.6 L0.5,9.6 L10.7,9.6 Z" fill="#a3000f"/><path transform="translate(56,0)" d="M14,0 L17.3,9.6 L27.5,9.6 L19.3,15.6 L22.4,25.6 L14,19.5 L5.6,25.6 L8.7,15.6 L0.5,9.6 L10.7,9.6 Z" fill="#a3000f"/><path transform="translate(84,0)" d="M14,0 L17.3,9.6 L27.5,9.6 L19.3,15.6 L22.4,25.6 L14,19.5 L5.6,25.6 L8.7,15.6 L0.5,9.6 L10.7,9.6 Z" fill="#a3000f"/></svg>
<div class="t klab_Important" style="left:2068.00px;top:2078.08px;font-size:29.5px;line-height:35.4px;color:#a3000f;letter-spacing:1.019px;">Important</div>
<svg class="r" style="left:433px;top:2121px;" width="16" height="30" viewBox="0 0 16 30"><rect x="1" y="1" width="14" height="28" fill="#e0e0fa" stroke="#1f9a1f" stroke-width="2"/><rect x="0" y="0" width="16" height="4" fill="#1f9a1f"/><rect x="5" y="8" width="7" height="2" fill="#1f9a1f"/><rect x="5" y="12" width="7" height="2" fill="#1f9a1f"/></svg>
<div class="t k35_0" style="left:530.00px;top:2120.08px;font-size:29.5px;line-height:35.4px;color:#1f9a1f;letter-spacing:0.328px;">p9: Interesting!</div>
<div class="r" style="left:1771px;top:2123px;width:22px;height:22px;background:#fff;border:1.5px solid #111;box-sizing:border-box;"></div>
<svg class="r" style="left:1866px;top:2126px;" width="56" height="27" viewBox="0 0 56 27"><path transform="translate(0,0)" d="M14,0 L17.3,9.6 L27.5,9.6 L19.3,15.6 L22.4,25.6 L14,19.5 L5.6,25.6 L8.7,15.6 L0.5,9.6 L10.7,9.6 Z" fill="#1f9a1f"/><path transform="translate(28,0)" d="M14,0 L17.3,9.6 L27.5,9.6 L19.3,15.6 L22.4,25.6 L14,19.5 L5.6,25.6 L8.7,15.6 L0.5,9.6 L10.7,9.6 Z" fill="#1f9a1f"/></svg>
<div class="t klab_Done" style="left:2068.00px;top:2122.08px;font-size:29.5px;line-height:35.4px;color:#1f9a1f;letter-spacing:-0.131px;">Done</div>
<svg class="r" style="left:433px;top:2165px;" width="16" height="30" viewBox="0 0 16 30"><rect x="1" y="1" width="14" height="28" fill="#e0e0fa" stroke="#13139a" stroke-width="2"/><rect x="0" y="0" width="16" height="4" fill="#13139a"/><rect x="5" y="8" width="7" height="2" fill="#13139a"/><rect x="5" y="12" width="7" height="2" fill="#13139a"/></svg>
<div class="t k36_0" style="left:530.00px;top:2164.08px;font-size:29.5px;line-height:35.4px;color:#13139a;letter-spacing:0.178px;">p9: Sea ice extent &amp; melt onset continues to vary greatly between years</div>
<div class="r" style="left:1771px;top:2167px;width:22px;height:22px;background:#fff;border:1.5px solid #111;box-sizing:border-box;"></div>
<div class="t klab_Read" style="left:2068.00px;top:2166.08px;font-size:29.5px;line-height:35.4px;color:#13139a;letter-spacing:-1.782px;">Read</div>
<div class="r" style="left:2240px;top:164px;width:1532px;height:100px;background:#ebebeb;"></div>
<div class="r" style="left:2240px;top:264px;width:1532px;height:2px;background:#c4c4c4;"></div>
<div class="r" style="left:2253px;top:189px;width:38px;height:38px;border-radius:50%;background:#bfbfbf;"></div>
<div class="r" style="left:2258px;top:194px;width:28px;height:28px;border-radius:50%;background:linear-gradient(135deg,#9ad3d3 0%,#82b9ba 40%,#5f8c8d 70%,#2e4c4d 100%);"></div>
<div class="r" style="left:2261px;top:197px;width:22px;height:22px;border-radius:50%;border:2.2px solid #12958f;box-sizing:border-box;background:linear-gradient(135deg,#98cccc,#7fa9aa);"></div>
<div class="t kttl" style="left:2386.00px;top:183.77px;font-size:33px;line-height:39.6px;color:#a0000f;letter-spacing:0.473px;">p1: Overall Arctic sea ice thickness decreased due to a decreased fraction of multi...</div>
<div class="r" style="left:3674px;top:183px;width:84px;height:32px;border-radius:8px;background:#fff;box-shadow:0 0 0 1px #cfcfcf, 0 1px 1px rgba(0,0,0,.15);"></div>
<svg class="r" style="left:3703px;top:188px;" width="27" height="23" viewBox="0 0 27 23"><g fill="none" stroke="#111" stroke-width="1.5"><rect x="1" y="1" width="25" height="21"/><line x1="13.5" y1="1" x2="13.5" y2="22"/><line x1="1" y1="8" x2="26" y2="8"/><line x1="1" y1="15" x2="26" y2="15"/></g></svg>
<svg class="r" style="left:3707px;top:238px;" width="18" height="15" viewBox="0 0 18 15"><polygon points="0,0 18,0 9,15" fill="#8c8c8c"/></svg>
<div class="r" style="left:2241px;top:266px;width:1529px;height:420px;background:#fff;"></div>
<div class="r" style="left:2241px;top:266px;width:2px;height:1963px;background:#c8c8c8;"></div>
<div class="r" style="left:2241px;top:686px;width:1531px;height:2px;background:#c8c8c8;"></div>
<div class="r" style="left:2243px;top:688px;width:1529px;height:17px;background:#ebebeb;"></div>
<div class="r" style="left:2241px;top:704px;width:1531px;height:2px;background:#c4c4c4;"></div>
<div class="t ka0" style="left:2251.00px;top:275.54px;font-size:23.2px;line-height:27.84px;color:#111;font-weight:bold;-webkit-text-stroke-width:0.3px;letter-spacing:-0.600px;">Flagged</div>
<div class="t" style="left:2251.00px;top:317.64px;font-size:23.2px;line-height:27.84px;color:#111;font-weight:bold;-webkit-text-stroke-width:0.3px;">Color</div>
<div class="t" style="left:2671.00px;top:317.64px;font-size:23.2px;line-height:27.84px;color:#111;font-weight:bold;-webkit-text-stroke-width:0.3px;">#FB0007</div>
<div class="t ka1" style="left:2251.00px;top:359.44px;font-size:23.2px;line-height:27.84px;color:#111;font-weight:bold;-webkit-text-stroke-width:0.3px;letter-spacing:0.279px;">DEVONthinkLabel</div>
<div class="t" style="left:2671.00px;top:359.44px;font-size:23.2px;line-height:27.84px;color:#111;font-weight:bold;-webkit-text-stroke-width:0.3px;">Important</div>
<div class="t" style="left:2251.00px;top:401.64px;font-size:23.2px;line-height:27.84px;color:#111;font-weight:bold;-webkit-text-stroke-width:0.3px;">AnnotationType</div>
<div class="t" style="left:2671.00px;top:401.64px;font-size:23.2px;line-height:27.84px;color:#111;font-weight:bold;-webkit-text-stroke-width:0.3px;">Highlight</div>
<div class="t" style="left:2251.00px;top:443.04px;font-size:23.2px;line-height:27.84px;color:#111;font-weight:bold;-webkit-text-stroke-width:0.3px;">RatingString</div>
<div class="t" style="left:2251.00px;top:485.04px;font-size:23.2px;line-height:27.84px;color:#111;font-weight:bold;-webkit-text-stroke-width:0.3px;">Tags</div>
<div class="t ka2" style="left:2671.00px;top:485.04px;font-size:23.2px;line-height:27.84px;color:#111;font-weight:bold;-webkit-text-stroke-width:0.3px;letter-spacing:0.121px;">Arctic;ice thickness;multi-year ice;sea ice</div>
<div class="t" style="left:2251.00px;top:527.04px;font-size:23.2px;line-height:27.84px;color:#111;font-weight:bold;-webkit-text-stroke-width:0.3px;">AnnotationPage</div>
<div class="t" style="left:2671.00px;top:527.04px;font-size:23.2px;line-height:27.84px;color:#111;font-weight:bold;-webkit-text-stroke-width:0.3px;">1</div>
<div class="t" style="left:2251.00px;top:569.04px;font-size:23.2px;line-height:27.84px;color:#111;font-weight:bold;-webkit-text-stroke-width:0.3px;">Citekey</div>
<div class="t ka3" style="left:2671.00px;top:569.04px;font-size:23.2px;line-height:27.84px;color:#111;font-weight:bold;-webkit-text-stroke-width:0.3px;letter-spacing:0.116px;">Stroeve++2014ArcticMeltSeason</div>
<div class="t" style="left:2251.00px;top:611.04px;font-size:23.2px;line-height:27.84px;color:#111;font-weight:bold;-webkit-text-stroke-width:0.3px;">SourceURL</div>
<div class="t ka4" style="left:2671.00px;top:611.04px;font-size:23.2px;line-height:27.84px;color:#111;font-weight:bold;-webkit-text-stroke-width:0.3px;letter-spacing:0.509px;">x-devonthink-item://60DD7B50-909A-4A27...page=0&amp;annotation=Highlight&amp;x=173&amp;y=269</div>
<div class="t" style="left:2251.00px;top:653.04px;font-size:23.2px;line-height:27.84px;color:#111;font-weight:bold;-webkit-text-stroke-width:0.3px;">URL</div>
<div class="t ka5" style="left:2671.00px;top:653.04px;font-size:23.2px;line-height:27.84px;color:#111;font-weight:bold;-webkit-text-stroke-width:0.3px;letter-spacing:0.274px;">x-devonthink-item://2C66E285-3FD9-4F2F-8865-2112BCC4787F</div>
<div class="r" style="left:2600px;top:275px;width:28px;height:28px;border-radius:6px;background:#99989d;"></div>
<svg class="r" style="left:2600px;top:275px;" width="28" height="28" viewBox="0 0 28 28"><polyline points="7,15.5 12,21.5 21.5,7" fill="none" stroke="#fff" stroke-width="3" stroke-linecap="round" stroke-linejoin="round"/></svg>
<div class="r" style="left:2586px;top:315px;width:68px;height:32px;background:linear-gradient(#e2e2e2,#f6f6f6);border:1.5px solid #a5a5a5;box-sizing:border-box;"></div>
<div class="r" style="left:2596px;top:325px;width:48px;height:12px;background:#ff0a1a;border:2px solid #7f8a8a;box-sizing:border-box;"></div>
<svg class="r" style="left:2671px;top:447px;" width="66" height="20" viewBox="0 0 66 20"><path transform="translate(0,0) scale(0.78)" d="M14,0 L17.3,9.6 L27.5,9.6 L19.3,15.6 L22.4,25.6 L14,19.5 L5.6,25.6 L8.7,15.6 L0.5,9.6 L10.7,9.6 Z" fill="#1a1a1a"/><path transform="translate(22,0) scale(0.78)" d="M14,0 L17.3,9.6 L27.5,9.6 L19.3,15.6 L22.4,25.6 L14,19.5 L5.6,25.6 L8.7,15.6 L0.5,9.6 L10.7,9.6 Z" fill="#1a1a1a"/><path transform="translate(44,0) scale(0.78)" d="M14,0 L17.3,9.6 L27.5,9.6 L19.3,15.6 L22.4,25.6 L14,19.5 L5.6,25.6 L8.7,15.6 L0.5,9.6 L10.7,9.6 Z" fill="#1a1a1a"/></svg>
<svg class="r" style="left:2603px;top:612px;" width="26" height="26" viewBox="0 0 26 26"><defs><linearGradient id="gl0" x1="0" y1="0" x2="0" y2="1"><stop offset="0" stop-color="#f2fbff"/><stop offset="0.35" stop-color="#bfe4f6"/><stop offset="0.7" stop-color="#5f8fd6"/><stop offset="1" stop-color="#2347b8"/></linearGradient></defs><circle cx="13" cy="13" r="12.6" fill="url(#gl0)" stroke="#3a62c4" stroke-width="0.8"/><path d="M5,9 Q9,4 14,5 Q12,8 9,10 Q8,13 6,12 Z" fill="#ffffff" opacity="0.85"/><path d="M8,13 Q12,12 16,15 Q15,20 12,23 Q10,19 8,16 Z" fill="#f4f6ff" opacity="0.9"/><path d="M19,8 Q22,10 21,14 Q19,12 18,10 Z" fill="#ffffff" opacity="0.8"/></svg>
<svg class="r" style="left:2603px;top:654px;" width="26" height="26" viewBox="0 0 26 26"><defs><linearGradient id="gl1" x1="0" y1="0" x2="0" y2="1"><stop offset="0" stop-color="#f2fbff"/><stop offset="0.35" stop-color="#bfe4f6"/><stop offset="0.7" stop-color="#5f8fd6"/><stop offset="1" stop-color="#2347b8"/></linearGradient></defs><circle cx="13" cy="13" r="12.6" fill="url(#gl1)" stroke="#3a62c4" stroke-width="0.8"/><path d="M5,9 Q9,4 14,5 Q12,8 9,10 Q8,13 6,12 Z" fill="#ffffff" opacity="0.85"/><path d="M8,13 Q12,12 16,15 Q15,20 12,23 Q10,19 8,16 Z" fill="#f4f6ff" opacity="0.9"/><path d="M19,8 Q22,10 21,14 Q19,12 18,10 Z" fill="#ffffff" opacity="0.8"/></svg>
<div class="r" style="left:2243px;top:705px;width:1527px;height:982px;background:#fff;"></div>
<div class="t kn0" style="left:2301.00px;top:752.77px;font-size:33px;line-height:39.6px;color:#111;letter-spacing:0.702px;"># Overall Arctic sea ice thickness decreased due to a decreased fraction of multi-year ice</div>
<div class="t kn1" style="left:2301.00px;top:859.77px;font-size:33px;line-height:39.6px;color:#111;letter-spacing:0.562px;">&gt; The decreased spatial extent of the ice cover has been accompanied by large reductions in</div>
<div class="t kn2" style="left:2301.00px;top:905.37px;font-size:33px;line-height:39.6px;color:#111;letter-spacing:0.505px;">ice thickness [e.g., Kwok et al., 2009] that are primarily explained by changes in the ocean’s</div>
<div class="t kn3" style="left:2301.00px;top:951.17px;font-size:33px;line-height:39.6px;color:#111;letter-spacing:0.463px;">coverage of multiyear ice (MYI) [e.g., <span style="text-decoration:underline dotted #e0303a;text-underline-offset:6px;text-decoration-thickness:2px">Maslanik</span> et al., 2011]. In the mid-1980s, MYI</div>
<div class="t kn4" style="left:2301.00px;top:996.77px;font-size:33px;line-height:39.6px;color:#111;letter-spacing:0.678px;">accounted for 70% of total winter ice extent, whereas by the end of 2012, it had dropped to</div>
<div class="t kn5" style="left:2301.00px;top:1042.77px;font-size:33px;line-height:39.6px;color:#111;letter-spacing:0.442px;">less than 20%. As seasonal ice has replaced MYI as the dominant ice type, the Arctic Ocean</div>
<div class="t kn6" style="left:2301.00px;top:1088.47px;font-size:33px;line-height:39.6px;color:#111;letter-spacing:0.880px;">has become more vulnerable to a “kick” from natural climate variability, initiating feedback</div>
<div class="t kn7" style="left:2301.00px;top:1134.27px;font-size:33px;line-height:39.6px;color:#111;letter-spacing:0.891px;">that have the potential to promote a rapid transition toward a seasonally ice-free Artic state</div>
<div class="t kn8" style="left:2301.00px;top:1180.07px;font-size:33px;line-height:39.6px;color:#111;letter-spacing:0.974px;">[Holland et al., 2006].</div>
<div class="t kn9" style="left:2301.00px;top:1286.27px;font-size:33px;line-height:39.6px;color:#111;letter-spacing:1.095px;">The continuous warming of the Arctic lengthens the melt season [[045B-QA02-VB4T]].</div>
<div class="t kn10" style="left:2301.00px;top:1330.77px;font-size:33px;line-height:39.6px;color:#111;letter-spacing:0.936px;">With the larger fraction of first-year ice, this makes the Arctic more vulnerable to ultimately</div>
<div class="t kn11" style="left:2301.00px;top:1376.77px;font-size:33px;line-height:39.6px;color:#111;letter-spacing:0.674px;">transition to enlarged ice-free areas.</div>
<div class="t kn12" style="left:2301.00px;top:1483.77px;font-size:33px;line-height:39.6px;color:#111;letter-spacing:0.527px;">For factors causing accelerated ice loss in summer, see [[01W2-2C6G-SGPA]].</div>
<div class="r" style="left:2241px;top:1687px;width:1531px;height:2px;background:#c4c4c4;"></div>
<div class="r" style="left:2243px;top:1689px;width:494px;height:540px;background:#fff;"></div>
<div class="r" style="left:2243px;top:1734px;width:494px;height:2px;background:#dedede;"></div>
<div class="t ka6" style="left:2397.80px;top:1698.70px;font-size:22.5px;line-height:27.0px;color:#444;letter-spacing:0.414px;-webkit-text-stroke-width:0.1px;">Inbound Links (0)</div>
<div class="r" style="left:2756px;top:1689px;width:495px;height:540px;background:#fff;"></div>
<div class="r" style="left:2756px;top:1734px;width:495px;height:2px;background:#dedede;"></div>
<div class="t ka7" style="left:2902.00px;top:1698.70px;font-size:22.5px;line-height:27.0px;color:#444;letter-spacing:0.463px;-webkit-text-stroke-width:0.1px;">Outbound Links (2)</div>
<div class="r" style="left:3274px;top:1689px;width:496px;height:540px;background:#fff;"></div>
<div class="r" style="left:3274px;top:1734px;width:496px;height:2px;background:#dedede;"></div>
<div class="t ka8" style="left:3465.70px;top:1698.70px;font-size:22.5px;line-height:27.0px;color:#444;letter-spacing:0.392px;-webkit-text-stroke-width:0.1px;">Suggested</div>
<div class="r" style="left:2737px;top:1689px;width:19px;height:540px;background:#ebebeb;box-shadow:inset 2px 0 0 #c8c8c8, inset -2px 0 0 #c8c8c8;"></div>
<div class="r" style="left:3251px;top:1689px;width:23px;height:540px;background:#ebebeb;box-shadow:inset 2px 0 0 #c8c8c8, inset -2px 0 0 #c8c8c8;"></div>
<svg class="r" style="left:2779px;top:1751.0px;" width="16" height="30" viewBox="0 0 16 30"><rect x="1" y="1" width="14" height="28" fill="#e0e0fa" stroke="#6227a8" stroke-width="2"/><rect x="0" y="0" width="16" height="3" fill="#6227a8"/><rect x="5" y="9" width="7" height="2" fill="#6227a8"/><rect x="5" y="13" width="7" height="2" fill="#6227a8"/></svg>
<svg class="r" style="left:2771px;top:1761.0px;" width="8" height="10" viewBox="0 0 8 10"><polygon points="0,0 8,5 0,10" fill="#6227a8"/></svg>
<div class="t ka9" style="left:2820.00px;top:1747.36px;font-size:23.5px;line-height:28.2px;color:#111;letter-spacing:0.180px;-webkit-text-stroke-width:0.2px;">p1: "• Melt season has lengthened •…</div>
<svg class="r" style="left:2779px;top:1814.5px;" width="16" height="30" viewBox="0 0 16 30"><rect x="1" y="1" width="14" height="28" fill="#e0e0fa" stroke="#a3000f" stroke-width="2"/><rect x="0" y="0" width="16" height="3" fill="#a3000f"/><rect x="5" y="9" width="7" height="2" fill="#a3000f"/><rect x="5" y="13" width="7" height="2" fill="#a3000f"/><rect x="5" y="17" width="7" height="2" fill="#a3000f"/></svg>
<svg class="r" style="left:2771px;top:1824.5px;" width="8" height="10" viewBox="0 0 8 10"><polygon points="0,0 8,5 0,10" fill="#a3000f"/></svg>
<div class="t ka10" style="left:2820.00px;top:1810.86px;font-size:23.5px;line-height:28.2px;color:#111;letter-spacing:0.190px;-webkit-text-stroke-width:0.2px;">p9: Factors causing accelerated ice…</div>
<svg class="r" style="left:3299px;top:1751px;" width="16" height="30" viewBox="0 0 16 30"><rect x="1" y="1" width="14" height="28" fill="#e0e0fa" stroke="#1f9a1f" stroke-width="2"/><rect x="0" y="0" width="16" height="3" fill="#1f9a1f"/><rect x="5" y="9" width="7" height="2" fill="#1f9a1f"/><rect x="5" y="13" width="7" height="2" fill="#1f9a1f"/></svg>
<div class="t ka11" style="left:3340.00px;top:1747.76px;font-size:23.5px;line-height:28.2px;color:#111;letter-spacing:0.171px;-webkit-text-stroke-width:0.2px;">p9: Interesting!</div>
<svg class="r" style="left:3299px;top:1807.4px;" width="16" height="30" viewBox="0 0 16 30"><rect x="1" y="1" width="14" height="28" fill="#e0e0fa" stroke="#13139a" stroke-width="2"/><rect x="0" y="0" width="16" height="3" fill="#13139a"/><rect x="5" y="9" width="7" height="2" fill="#13139a"/><rect x="5" y="13" width="7" height="2" fill="#13139a"/></svg>
<div class="t ka12" style="left:3340.00px;top:1804.16px;font-size:23.5px;line-height:28.2px;color:#111;letter-spacing:0.166px;-webkit-text-stroke-width:0.2px;">p9: Sea ice extent &amp; melt onset c…</div>
<svg class="r" style="left:3299px;top:1863px;" width="16" height="30" viewBox="0 0 16 30"><rect x="1" y="1" width="14" height="28" fill="#e0e0fa" stroke="#a5841c" stroke-width="2"/><rect x="0" y="0" width="16" height="3" fill="#a5841c"/><rect x="5" y="9" width="7" height="2" fill="#a5841c"/><rect x="5" y="13" width="7" height="2" fill="#a5841c"/></svg>
<div class="t ka13" style="left:3340.00px;top:1859.76px;font-size:23.5px;line-height:28.2px;color:#111;letter-spacing:0.187px;-webkit-text-stroke-width:0.2px;">p1: "In this study, we update asse…</div>
<svg class="r" style="left:3299px;top:1919.4px;" width="16" height="30" viewBox="0 0 16 30"><rect x="1" y="1" width="14" height="28" fill="#e0e0fa" stroke="#b0561c" stroke-width="2"/><rect x="0" y="0" width="16" height="3" fill="#b0561c"/><rect x="5" y="9" width="7" height="2" fill="#b0561c"/><rect x="5" y="13" width="7" height="2" fill="#b0561c"/></svg>
<div class="t ka14" style="left:3340.00px;top:1916.16px;font-size:23.5px;line-height:28.2px;color:#111;letter-spacing:0.202px;-webkit-text-stroke-width:0.2px;">p4: "Changes in the melt season i…</div>
<svg class="r" style="left:3299px;top:1975.4px;" width="16" height="30" viewBox="0 0 16 30"><rect x="1" y="1" width="14" height="28" fill="#e0e0fa" stroke="#6227a8" stroke-width="2"/><rect x="0" y="0" width="16" height="3" fill="#6227a8"/><rect x="5" y="9" width="7" height="2" fill="#6227a8"/><rect x="5" y="13" width="7" height="2" fill="#6227a8"/></svg>
<div class="t ka15" style="left:3340.00px;top:1972.16px;font-size:23.5px;line-height:28.2px;color:#111;letter-spacing:0.185px;-webkit-text-stroke-width:0.2px;">p4: "Trends in (a) melt onset, (b) f…</div>
<svg class="r" style="left:3299px;top:2031px;" width="16" height="30" viewBox="0 0 16 30"><rect x="1" y="1" width="14" height="28" fill="#e0e0fa" stroke="#b0561c" stroke-width="2"/><rect x="0" y="0" width="16" height="3" fill="#b0561c"/><rect x="5" y="9" width="7" height="2" fill="#b0561c"/><rect x="5" y="13" width="7" height="2" fill="#b0561c"/></svg>
<div class="t ka16" style="left:3340.00px;top:2027.76px;font-size:23.5px;line-height:28.2px;color:#111;letter-spacing:0.175px;-webkit-text-stroke-width:0.2px;">p3: Besides rising air temperature…</div>
<svg class="r" style="left:3299px;top:2086.6px;" width="16" height="30" viewBox="0 0 16 30"><rect x="1" y="1" width="14" height="28" fill="#e0e0fa" stroke="#a3000f" stroke-width="2"/><rect x="0" y="0" width="16" height="3" fill="#a3000f"/><rect x="5" y="9" width="7" height="2" fill="#a3000f"/><rect x="5" y="13" width="7" height="2" fill="#a3000f"/></svg>
<div class="t ka17" style="left:3340.00px;top:2083.36px;font-size:23.5px;line-height:28.2px;color:#111;letter-spacing:0.167px;-webkit-text-stroke-width:0.2px;">p5: "Several interrelated factors h…</div>
<svg class="r" style="left:3299px;top:2143px;" width="16" height="30" viewBox="0 0 16 30"><rect x="1" y="1" width="14" height="28" fill="#e0e0fa" stroke="#a3000f" stroke-width="2"/><rect x="0" y="0" width="16" height="3" fill="#a3000f"/><rect x="5" y="9" width="7" height="2" fill="#a3000f"/><rect x="5" y="13" width="7" height="2" fill="#a3000f"/></svg>
<div class="t ka18" style="left:3340.00px;top:2139.76px;font-size:23.5px;line-height:28.2px;color:#111;letter-spacing:0.168px;-webkit-text-stroke-width:0.2px;">p5: "Loss of the sea-ice cover will…</div>
<div class="r" style="left:112px;top:213px;width:2px;height:2016px;background:#b9b9b9;"></div>
<div class="r" style="left:3770px;top:266px;width:2px;height:422px;background:#c4c4c4;"></div>
<div class="r" style="left:3770px;top:704px;width:2px;height:1525px;background:#c4c4c4;"></div>
</body></html>
